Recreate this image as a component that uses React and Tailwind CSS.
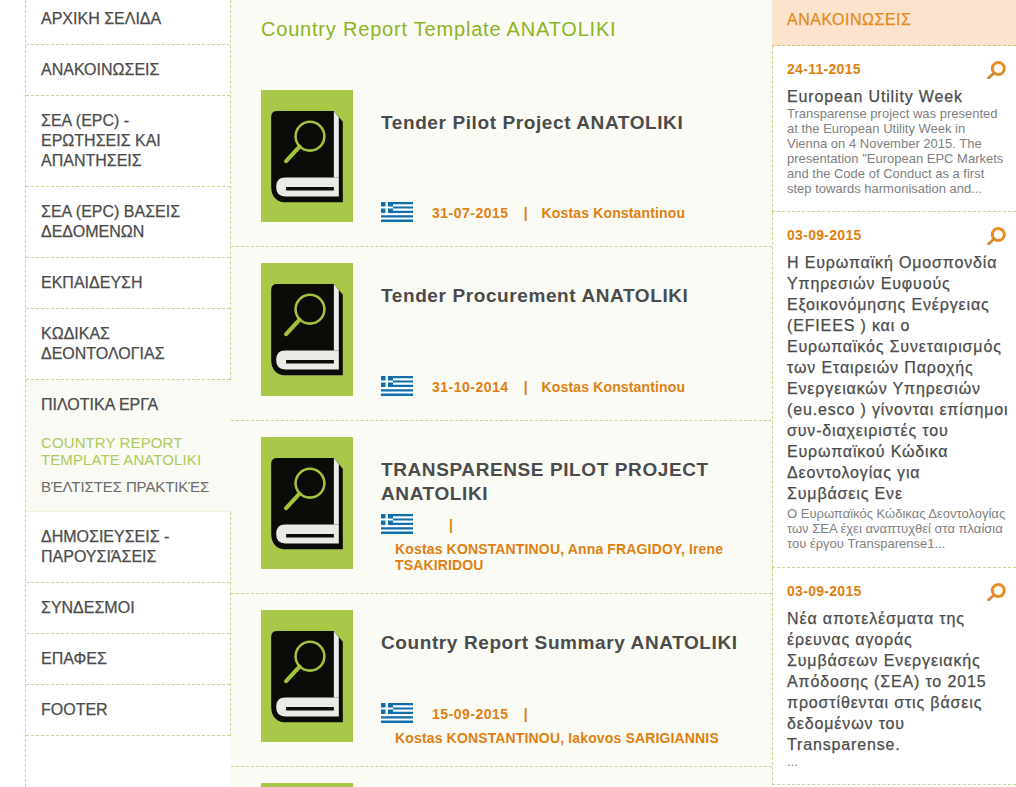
import React from "react";

const navTop = [
  { label: "ΑΡΧΙΚΗ ΣΕΛΙΔΑ", first: true },
  { label: "ΑΝΑΚΟΙΝΩΣΕΙΣ" },
  { label: "ΣΕΑ (EPC) - ΕΡΩΤΗΣΕΙΣ ΚΑΙ ΑΠΑΝΤΗΣΕΙΣ" },
  { label: "ΣΕΑ (EPC) ΒΑΣΕΙΣ ΔΕΔΟΜΕΝΩΝ" },
  { label: "ΕΚΠΑΙΔΕΥΣΗ" },
  { label: "ΚΩΔΙΚΑΣ ΔΕΟΝΤΟΛΟΓΙΑΣ" },
];

const navBottom = [
  { label: "ΔΗΜΟΣΙΕΥΣΕΙΣ - ΠΑΡΟΥΣΙΆΣΕΙΣ" },
  { label: "ΣΥΝΔΕΣΜΟΙ" },
  { label: "ΕΠΑΦΕΣ" },
  { label: "FOOTER" },
];

const reports = [
  { title: "Tender Pilot Project ANATOLIKI", date: "31-07-2015", author: "Kostas Konstantinou" },
  { title: "Tender Procurement ANATOLIKI", date: "31-10-2014", author: "Kostas Konstantinou" },
  {
    title: "TRANSPARENSE PILOT PROJECT ANATOLIKI",
    date: "",
    author: "Kostas KONSTANTINOU, Anna FRAGIDOY, Irene TSAKIRIDOU",
  },
  {
    title: "Country Report Summary ANATOLIKI",
    date: "15-09-2015",
    author: "Kostas KONSTANTINOU, Iakovos SARIGIANNIS",
  },
];

const news = [
  {
    date: "24-11-2015",
    title: "European Utility Week",
    body: 'Transparense project was presented at the European Utility Week in Vienna on 4 November 2015. The presentation "European EPC Markets and the Code of Conduct as a first step towards harmonisation and...',
    bodyClass: "mb-[15px]",
  },
  {
    date: "03-09-2015",
    title:
      "Η Ευρωπαϊκή Ομοσπονδία Υπηρεσιών Ευφυούς Εξοικονόμησης Ενέργειας (EFIEES ) και ο Ευρωπαϊκός Συνεταιρισμός των Εταιρειών Παροχής Ενεργειακών Υπηρεσιών (eu.esco ) γίνονται επίσημοι συν-διαχειριστές του Ευρωπαϊκού Κώδικα Δεοντολογίας για Συμβάσεις\u00a0Ενε",
    body: "Ο Ευρωπαϊκός Κώδικας Δεοντολογίας των ΣΕΑ έχει αναπτυχθεί στα πλαίσια του έργου Transparense1...",
    bodyClass: "mt-[3px] mb-4",
  },
  {
    date: "03-09-2015",
    title:
      "Νέα αποτελέσματα της έρευνας αγοράς Συμβάσεων\u00a0Ενεργειακής Απόδοσης (ΣΕΑ) το 2015 προστίθενται στις βάσεις δεδομένων του Transparense.",
    body: "...",
    bodyClass: "mb-[15px]",
  },
];

function BookIcon() {
  return (
    <svg viewBox="0 0 92 133" className="block w-[92px] h-[132.25px] shrink-0 bg-[#a9c748]">
      <path d="M16 21H73L82 32V113H26Q10 113 10 97V27Q10 21 16 21Z" fill="#0b0b07" />
      <path d="M73 21L78 27.5V88H73Z" fill="#e9ebe4" />
      <path d="M78 88H24Q15 88 15 97.5Q15 107 24 107H78Z" fill="#e9ebe4" />
      <path d="M25 97.5H73V101H25Z" fill="#0b0b07" />
      <circle cx="49" cy="46.5" r="14.5" fill="none" stroke="#a3c23c" strokeWidth="2.6" />
      <path d="M38.5 57L25 71.5" fill="none" stroke="#a3c23c" strokeWidth="4.2" strokeLinecap="round" />
    </svg>
  );
}

function GreekFlag() {
  return (
    <svg viewBox="0 0 32 20" className="block w-8 h-5 mb-1 shrink-0">
      <rect width="32" height="20" fill="#fff" />
      <path d="M0 0H32V2.2H0ZM12 4.4H32V6.6H12ZM12 8.8H32V11H12ZM0 13.2H32V15.4H0ZM0 17.6H32V20H0Z" fill="#0f6eab" />
      <rect width="12" height="11" fill="#0f6eab" />
      <path d="M4.5 0H7V11H4.5ZM0 4.4H12V6.6H0Z" fill="#fff" />
    </svg>
  );
}

function SearchIcon() {
  return (
    <svg viewBox="0 0 20 20" className="w-5 h-5 shrink-0">
      <circle cx="12.3" cy="9.5" r="6" fill="none" stroke="#e58f22" strokeWidth="3" />
      <path d="M8 14L2.5 19" fill="none" stroke="#d08a38" strokeWidth="3" strokeLinecap="round" />
    </svg>
  );
}

function NavItem({ label, first }) {
  return (
    <a
      href="#"
      className={`block pl-[15px] pr-[30px] pb-[15px] border-b border-dashed border-[#c9d492] bg-white text-[16px] leading-5 text-[#4b4b4b] [-webkit-text-stroke:0.25px] ${
        first ? "pt-[9px]" : "pt-[15px]"
      }`}
    >
      {label}
    </a>
  );
}

function ReportRow({ title, date, author, last }) {
  return (
    <div className={`flex pl-[30px] pt-4 h-[173.25px] shrink-0 ${last ? "" : "border-b border-dashed border-[#c9d492]"}`}>
      <BookIcon />
      <div className="flex flex-col justify-between ml-[28px] w-[364px] h-[136.25px]">
        <h3 className="pt-[21px] text-[19px] leading-6 font-bold tracking-[0.6px] text-[#4b4b4b]">{title}</h3>
        {!last && (
          <div className="flex flex-wrap items-start text-[14px] leading-4 font-bold text-[#e07f10]">
            <GreekFlag />
            <span className="ml-[19px] mt-[3px] min-w-[2px] tracking-[0.5px]">{date}</span>
            <span className="ml-[15px] mt-[3px]">|</span>
            <span className="ml-[14px] mt-[3px] tracking-[0.15px]">{author}</span>
          </div>
        )}
      </div>
    </div>
  );
}

function NewsItem({ date, title, body, bodyClass }) {
  return (
    <div className="pl-[14px] pr-2 pt-[13px] border-b border-l border-dashed border-[#c9d492] bg-white">
      <div className="flex items-center justify-between pr-0.5 h-5">
        <span className="text-[14px] font-bold tracking-[0.3px] text-[#e07f10]">{date}</span>
        <SearchIcon />
      </div>
      <h4 className="mt-[7px] mb-[-1px] mr-[-4px] text-[16px] leading-[21px] tracking-[0.85px] text-[#4b4b4b] [-webkit-text-stroke:0.25px]">
        {title}
      </h4>
      <p className={`text-[13px] leading-[15px] text-[#808080] ${bodyClass}`}>{body}</p>
    </div>
  );
}

export default function App() {
  return (
    <div className="flex h-screen overflow-hidden bg-white font-['Liberation_Sans',Arial,sans-serif]">
      <aside className="ml-[25px] w-[206px] shrink-0 border-l border-dashed border-[#c9d492]">
        <div className="border-r border-dashed border-[#c9d492]">
          {navTop.map((item) => (
            <NavItem key={item.label} {...item} />
          ))}
        </div>
        <div className="h-[132px] bg-[#f9faf4] pl-[15px] pr-5 pt-[15px] border-b border-dotted border-[#e6ead2]">
          <div className="text-[16px] leading-5 text-[#4b4b4b] [-webkit-text-stroke:0.25px]">ΠΙΛΟΤΙΚΑ ΕΡΓΑ</div>
          <div className="mt-[19px] text-[15px] leading-[17px] tracking-[0.1px] text-[#aec95a]">
            COUNTRY REPORT TEMPLATE ANATOLIKI
          </div>
          <div className="mt-[10px] text-[15px] leading-[17px] tracking-[-0.1px] text-[#6b6b6b]">ΒΈΛΤΙΣΤΕΣ ΠΡΑΚΤΙΚΈΣ</div>
        </div>
        <div className="border-r border-dashed border-[#c9d492]">
          {navBottom.map((item) => (
            <NavItem key={item.label} {...item} />
          ))}
        </div>
      </aside>

      <main className="flex flex-col w-[541px] shrink-0 bg-[#fbfbf6]">
        <h1 className="h-[74px] pl-[30px] pt-[17px] text-[20px] leading-6 tracking-[0.8px] text-[#8db41f] shrink-0">
          Country Report Template ANATOLIKI
        </h1>
        {reports.map((report) => (
          <ReportRow key={report.title} {...report} />
        ))}
        <ReportRow title="" date="" author="" last />
      </main>

      <aside className="w-[244px] shrink-0">
        <h2 className="h-[46px] pl-[15px] pt-[10px] bg-[#fce3cd] border-b border-dashed border-[#c9c77f] text-[16px] leading-5 tracking-[0.5px] text-[#e58a1c] [-webkit-text-stroke:0.25px]">
          ΑΝΑΚΟΙΝΩΣΕΙΣ
        </h2>
        {news.map((item) => (
          <NewsItem key={item.title} {...item} />
        ))}
      </aside>
    </div>
  );
}
